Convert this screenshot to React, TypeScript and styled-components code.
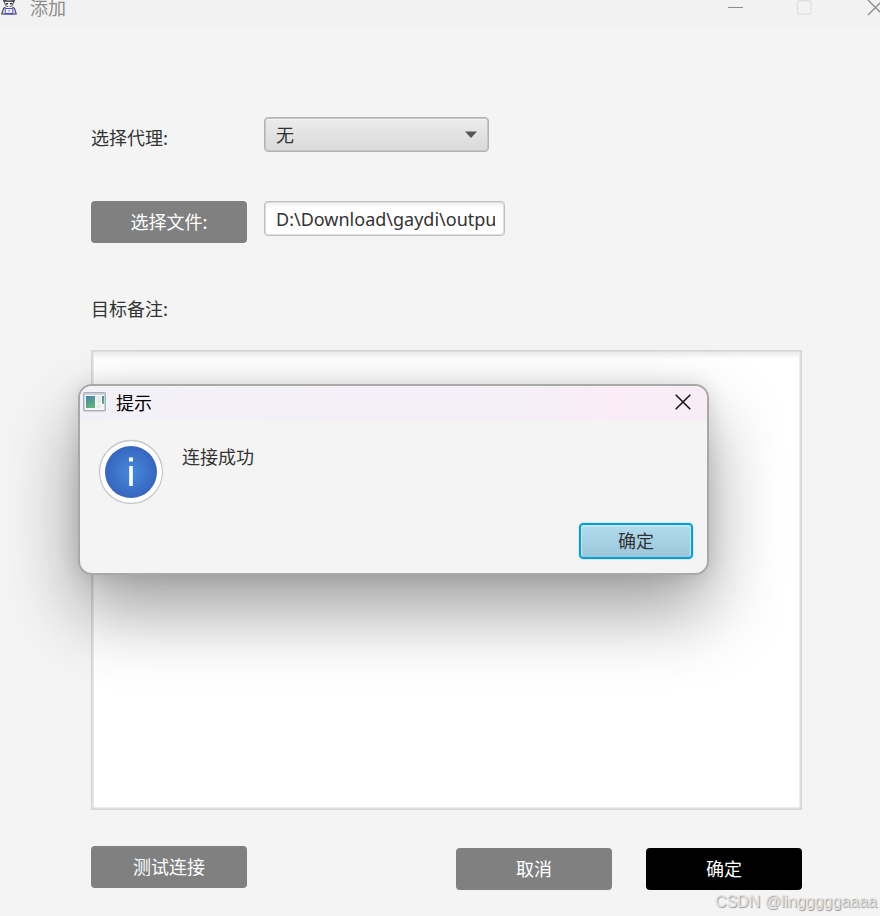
import React from "react";
import styled, { createGlobalStyle } from "styled-components";

const GlobalStyle = createGlobalStyle`
  * { box-sizing: border-box; }
  body {
    margin: 0;
    background: #f4f4f4;
    color: #333;
    font-family: "Noto Sans", "Noto Sans CJK SC", sans-serif;
    font-size: 18px;
    line-height: 24px;
  }
  button, input, select, textarea { font: inherit; color: inherit; }
`;

const Window = styled.div`
  position: relative;
  display: flex;
  flex-direction: column;
  min-height: 100vh;
  overflow: hidden;
`;

const TitleBar = styled.header`
  display: flex;
  align-items: flex-start;
  height: 27px;
  background: #f2f2f2;
  color: #8c8c8c;
  font-family: "Noto Sans CJK SC", sans-serif;
  line-height: 14px;
`;

const AppIcon = styled.svg`
  width: 18px;
  height: 16px;
  margin-right: 12px;
`;

const WindowControls = styled.div`
  display: flex;
  margin-left: auto;
  gap: 52px;
`;

const ControlButton = styled.button`
  display: flex;
  padding: 0;
  border: 0;
  background: none;
  color: #8c8c8c;
`;

const Form = styled.form`
  display: flex;
  flex: 1;
  flex-direction: column;
  padding: 90px 78px 26px 91px;
`;

const Fields = styled.div`
  display: grid;
  grid-template-columns: 156px 1fr;
  column-gap: 17px;
  row-gap: 49px;
`;

const Label = styled.label`
  font-family: "Noto Sans CJK SC", sans-serif;
  align-self: center;
`;

const RowLabel = styled(Label)`
  padding-top: 4px;
`;

const SelectBox = styled.div`
  display: grid;
  width: 225px;
  height: 35px;
  align-items: center;

  > * { grid-area: 1 / 1; }
`;

const Select = styled.select`
  width: 100%;
  height: 100%;
  padding: 0 30px 2px 11px;
  appearance: none;
  border: 1px solid #b2b2b2;
  border-radius: 4px;
  background: linear-gradient(#ececec, #d9d9d9);
  box-shadow: inset 0 0 0 1px #c6c6c6, inset 0 2px 0 #f4f4f4;
  font-family: "Noto Sans CJK SC", sans-serif;
`;

const Arrow = styled.svg`
  justify-self: end;
  width: 12px;
  height: 7px;
  margin-right: 12px;
  pointer-events: none;
`;

const PathInput = styled.input`
  width: 241px;
  height: 35px;
  padding: 0 9px 0 11px;
  border: 1px solid #c0c0c0;
  border-radius: 4px;
  background: linear-gradient(#f0f0f0, #fff 7px);
  box-shadow: inset 0 0 0 1px #dedede;
`;

const NotesLabel = styled(Label)`
  align-self: flex-start;
  margin: 53px 0 30px;
`;

const Notes = styled.textarea`
  display: block;
  flex: 1;
  width: 100%;
  min-height: 160px;
  padding: 8px 11px;
  resize: none;
  border: 1px solid #d6d6d6;
  outline: 0;
  background: linear-gradient(#e8e8e8, #fff 8px);
  box-shadow: inset 0 0 0 1px #dedede, inset 0 0 0 2px #ececec;
`;

const Footer = styled.footer`
  display: flex;
  justify-content: space-between;
  min-height: 44px;
  margin-top: 36px;
`;

const Actions = styled.div`
  display: flex;
  align-items: flex-end;
  gap: 34px;
`;

const Button = styled.button<{ $primary?: boolean }>`
  width: 156px;
  height: 42px;
  padding: 0 0 2px;
  border: 0;
  border-radius: 4px;
  background: ${(p) => (p.$primary ? "#000" : "#808080")};
  color: #fff;
  font-family: "Noto Sans CJK SC", sans-serif;
`;

const Dialog = styled.section`
  position: absolute;
  top: 384px;
  left: 78px;
  width: 631px;
  border: 2px solid #a8a8a8;
  border-radius: 14px;
  background: #f4f4f4;
  background-clip: padding-box;
  box-shadow: 0 36px 72px rgba(0, 0, 0, 0.38), 0 0 20px rgba(0, 0, 0, 0.12);
  font-family: "Noto Sans CJK SC", sans-serif;
  overflow: hidden;
`;

const DialogTitle = styled.header`
  display: flex;
  align-items: center;
  gap: 10px;
  height: 35px;
  padding: 0 16px 3px 3px;
  background: linear-gradient(100deg, #f3f1f8 0%, #f5eff8 70%, #faedf7 85%, #f8edf6);
  color: #000;

  h2 {
    flex: 1;
    margin: 0;
    font: inherit;
  }
`;

const CloseButton = styled(ControlButton)`
  color: #111;
`;

const DialogBody = styled.div`
  display: flex;
  gap: 18px;
  padding: 18px 19px 0 18px;

  p { margin: 5px 0 0; }
`;

const DialogActions = styled.div`
  display: flex;
  justify-content: flex-end;
  padding: 18px 14px 14px;
`;

const DefaultButton = styled.button`
  width: 114px;
  height: 36px;
  padding: 0 0 2px;
  border: 2px solid #0a9fd3;
  border-radius: 4px;
  outline: 1px solid #cfe9f2;
  background: linear-gradient(#b3dcee, #9bc6da);
  box-shadow: inset 0 1px 1px 1px #c3e7f4;
`;

const Watermark = styled.span`
  position: absolute;
  right: 3px;
  bottom: 2px;
  color: #e2e2e2;
  font-family: "Liberation Sans", sans-serif;
  font-size: 16px;
  text-shadow: 1px 1px 1px #999;
`;

function Cross({ size }: { size: number }) {
  return (
    <svg width={size} height={size} viewBox="0 0 16 16" fill="none" stroke="currentColor" strokeWidth="1.5" aria-hidden="true">
      <path d="M.7.7l14.6 14.6M15.3.7L.7 15.3" />
    </svg>
  );
}

export default function App() {
  return (
    <>
      <GlobalStyle />
      <Window>
        <TitleBar>
          <AppIcon viewBox="0 0 18 16" fill="none" aria-hidden="true">
            <path d="M4 1.500Q5 6.500 9 7.500Q13 6.500 14 1.500Z" fill="#f4f4f4" stroke="#55555c" />
            <path d="M3 .8Q9-.8 15 .8" stroke="#44444a" strokeWidth="1.200" />
            <path d="M5.500 3h2.800L7.800 4.400H6.200zM9.700 3h2.800l-.7 1.400h-1.600z" fill="#333338" />
            <path d="M5.500 7L3.500 8.500 1.800 14h14.400L14.500 8.500 12.500 7" fill="#f2f2f4" stroke="#4a4a52" strokeWidth="1.200" />
            <path d="M5.200 8.500h7.600v5H5.200z" fill="#f0f0ff" stroke="#4a4ad6" />
            <path d="M8.400 10.800h1.200M3.500 14h11" stroke="#4a4ad6" />
          </AppIcon>
          <span>添加</span>
          <WindowControls>
            <ControlButton type="button" aria-label="最小化">
              <svg width="17" height="16" viewBox="0 0 17 16" stroke="currentColor">
                <path d="M1 7.500h15" />
              </svg>
            </ControlButton>
            <ControlButton type="button" aria-label="最大化" disabled>
              <svg width="17" height="16" viewBox="0 0 17 16" fill="none" stroke="#dfdfdf" strokeWidth="1.300">
                <rect x="1.500" y=".7" width="13.500" height="13.500" rx="1.500" />
              </svg>
            </ControlButton>
            <ControlButton type="button" aria-label="关闭窗口">
              <svg width="15" height="16" viewBox="0 0 15 16" fill="none" stroke="currentColor" strokeWidth="1.300">
                <path d="M3 0l15 15M18 0L3 15" />
              </svg>
            </ControlButton>
          </WindowControls>
        </TitleBar>

        <Form onSubmit={(e) => e.preventDefault()}>
          <Fields>
            <RowLabel htmlFor="proxy">选择代理:</RowLabel>
            <SelectBox>
              <Select id="proxy" defaultValue="none">
                <option value="none">无</option>
              </Select>
              <Arrow viewBox="0 0 12 7" aria-hidden="true">
                <path d="M0 0.500h12L6 7z" fill="#555" />
              </Arrow>
            </SelectBox>
            <Button type="button">选择文件:</Button>
            <PathInput aria-label="选择文件" defaultValue="D:\Download\gaydi\output" />
          </Fields>
          <NotesLabel htmlFor="notes">目标备注:</NotesLabel>
          <Notes id="notes" />
          <Footer>
            <Button type="button">测试连接</Button>
            <Actions>
              <Button type="button">取消</Button>
              <Button type="submit" $primary>确定</Button>
            </Actions>
          </Footer>
        </Form>

        <Dialog role="dialog" aria-labelledby="dialog-title">
          <DialogTitle>
            <svg width="23" height="20" viewBox="0 0 23 20" aria-hidden="true">
              <defs>
                <linearGradient id="pane" x1="0" y1="0" x2="0.400" y2="1">
                  <stop offset="0" stopColor="#477fae" />
                  <stop offset="1" stopColor="#5cb477" />
                </linearGradient>
              </defs>
              <rect x=".75" y=".75" width="21.500" height="18" rx="1" fill="#f7f7f9" stroke="#a9afb8" strokeWidth="1.500" />
              <path d="M1 2h21" stroke="#c6cad1" strokeWidth="1.500" />
              <path d="M3 4h9v12H3z" fill="url(#pane)" />
              <path d="M13.500 4H18v7h-4.500zM13.500 12.500H18V16h-4.500z" fill="#e8e8ea" />
              <path d="M19 4h2v8h-2z" fill="url(#pane)" />
            </svg>
            <h2 id="dialog-title">提示</h2>
            <CloseButton type="button" aria-label="关闭">
              <Cross size={16} />
            </CloseButton>
          </DialogTitle>
          <DialogBody>
            <svg width="66" height="66" viewBox="0 0 66 66" aria-hidden="true">
              <defs>
                <radialGradient id="info">
                  <stop offset="0" stopColor="#458bdd" />
                  <stop offset="1" stopColor="#3765be" />
                </radialGradient>
              </defs>
              <circle cx="33" cy="33" r="31.500" fill="#fff" stroke="#c8c8c8" strokeWidth="1.300" />
              <circle cx="33" cy="33" r="26" fill="url(#info)" />
              <path d="M31 18.500h4v4h-4zM31.200 27h3.600v20h-3.600z" fill="#fff" />
            </svg>
            <p>连接成功</p>
          </DialogBody>
          <DialogActions>
            <DefaultButton type="button">确定</DefaultButton>
          </DialogActions>
        </Dialog>
        <Watermark>CSDN @lingggggaaaa</Watermark>
      </Window>
    </>
  );
}
